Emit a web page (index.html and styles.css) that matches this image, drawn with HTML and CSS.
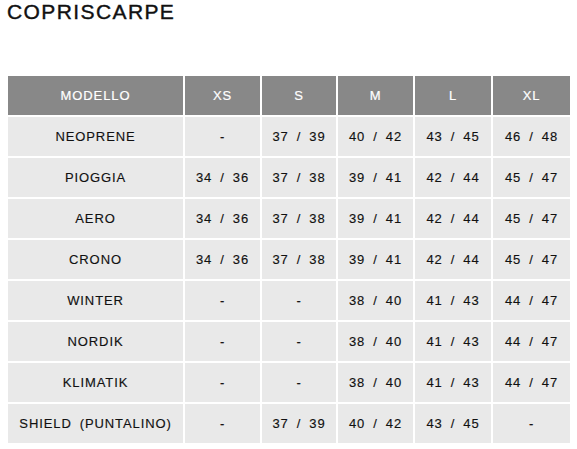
FILE: index.html
```html
<!DOCTYPE html>
<html lang="it">
<head>
<meta charset="utf-8">
<title>Copriscarpe</title>
<link rel="stylesheet" href="styles.css">
</head>
<body>
<h1 class="title">COPRISCARPE</h1>
<div class="table">
  <div class="cell head">MODELLO</div><div class="cell head">XS</div><div class="cell head">S</div><div class="cell head">M</div><div class="cell head">L</div><div class="cell head">XL</div>
  <div class="cell">NEOPRENE</div><div class="cell">-</div><div class="cell">37 / 39</div><div class="cell">40 / 42</div><div class="cell">43 / 45</div><div class="cell">46 / 48</div>
  <div class="cell">PIOGGIA</div><div class="cell">34 / 36</div><div class="cell">37 / 38</div><div class="cell">39 / 41</div><div class="cell">42 / 44</div><div class="cell">45 / 47</div>
  <div class="cell">AERO</div><div class="cell">34 / 36</div><div class="cell">37 / 38</div><div class="cell">39 / 41</div><div class="cell">42 / 44</div><div class="cell">45 / 47</div>
  <div class="cell">CRONO</div><div class="cell">34 / 36</div><div class="cell">37 / 38</div><div class="cell">39 / 41</div><div class="cell">42 / 44</div><div class="cell">45 / 47</div>
  <div class="cell">WINTER</div><div class="cell">-</div><div class="cell">-</div><div class="cell">38 / 40</div><div class="cell">41 / 43</div><div class="cell">44 / 47</div>
  <div class="cell">NORDIK</div><div class="cell">-</div><div class="cell">-</div><div class="cell">38 / 40</div><div class="cell">41 / 43</div><div class="cell">44 / 47</div>
  <div class="cell">KLIMATIK</div><div class="cell">-</div><div class="cell">-</div><div class="cell">38 / 40</div><div class="cell">41 / 43</div><div class="cell">44 / 47</div>
  <div class="cell">SHIELD (PUNTALINO)</div><div class="cell">-</div><div class="cell">37 / 39</div><div class="cell">40 / 42</div><div class="cell">43 / 45</div><div class="cell">-</div>
</div>
</body>
</html>
```
FILE: styles.css
```css
html, body {
  margin: 0;
  padding: 0;
  background: #ffffff;
}
body {
  font-family: "Liberation Sans", Arial, sans-serif;
  color: #111111;
}
.title {
  margin: 0;
  padding: 0 0 0 7px;
  height: 76px;
  font-size: 21px;
  font-weight: normal;
  letter-spacing: 1.4px;
  line-height: 24px;
  color: #111111;
  -webkit-text-stroke: 0.4px #111111;
}
.table {
  display: grid;
  grid-template-columns: 175px 75px 74px 75px 76px 77px;
  grid-auto-rows: 39px;
  gap: 2px;
  margin-left: 8px;
}
.cell {
  display: flex;
  align-items: center;
  justify-content: center;
  background: #e9e9e9;
  font-size: 13px;
  letter-spacing: 0.9px;
  word-spacing: 3.5px;
  color: #111111;
  -webkit-text-stroke: 0.15px #111111;
  white-space: nowrap;
}
.head {
  background: #888888;
  color: #ffffff;
  -webkit-text-stroke: 0.2px #ffffff;
}
```
